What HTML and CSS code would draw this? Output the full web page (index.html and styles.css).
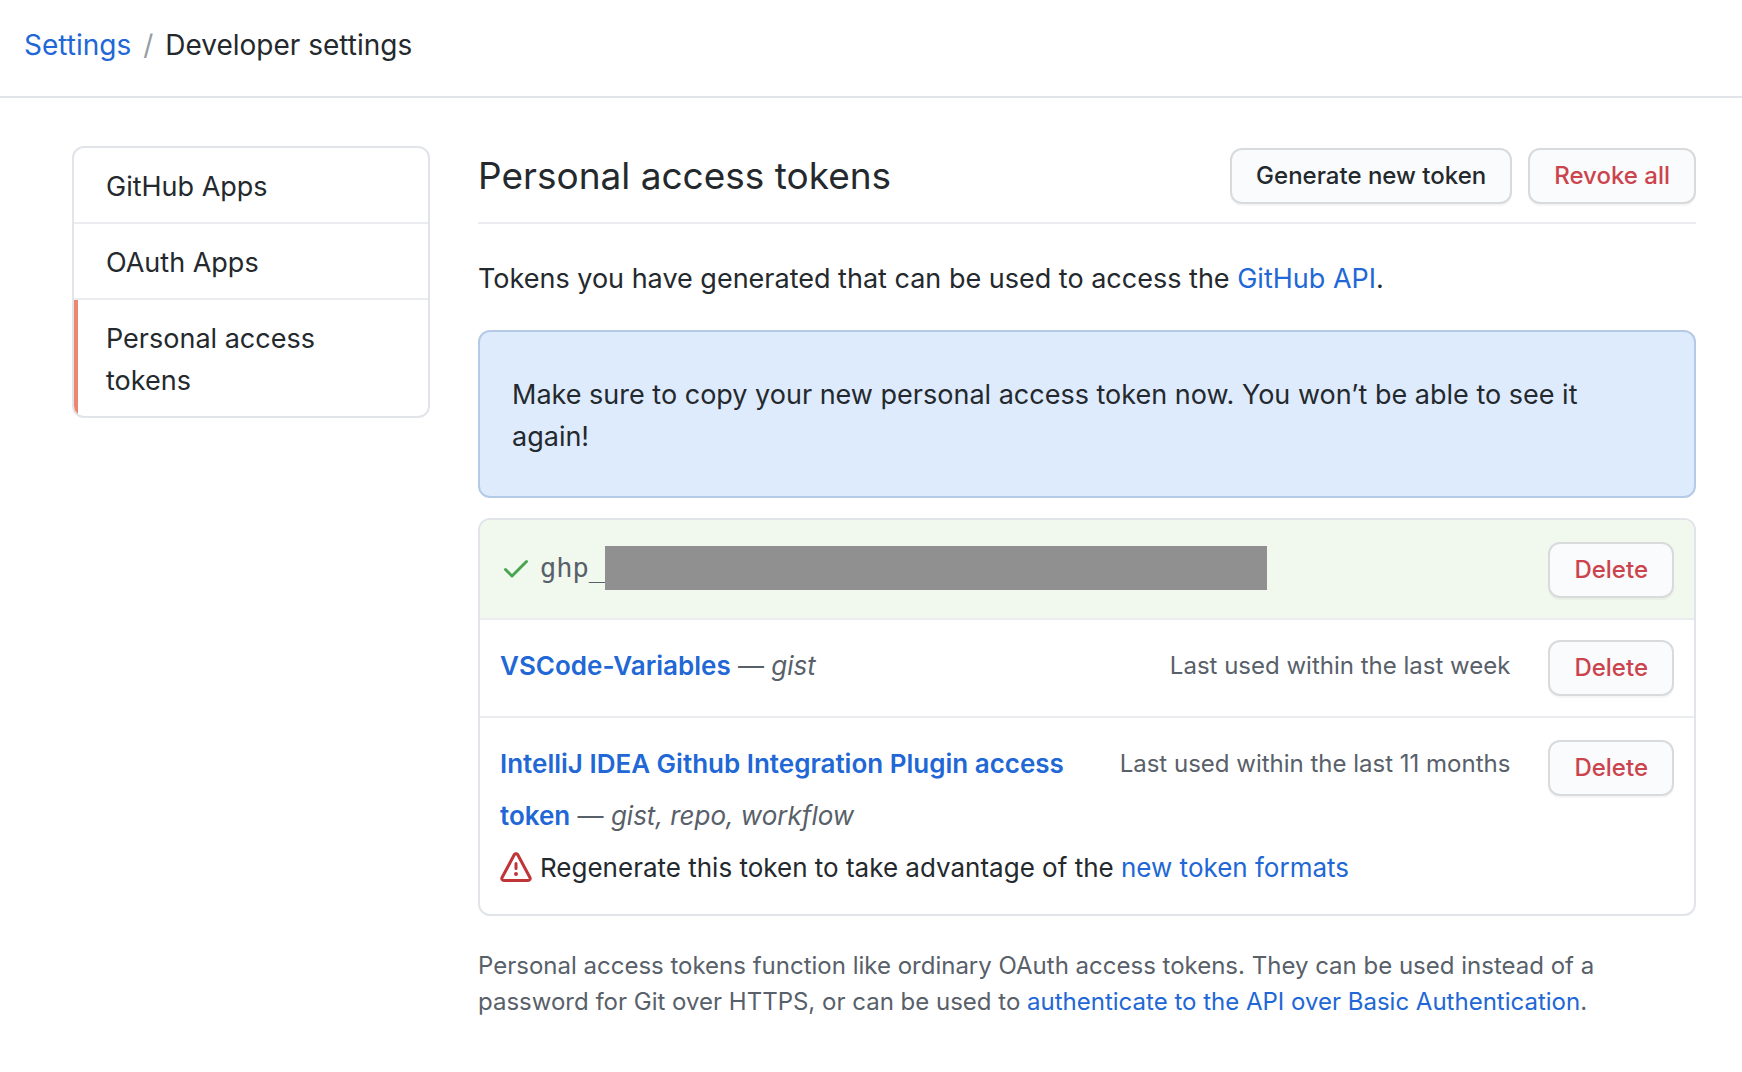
FILE: index.html
```html
<!DOCTYPE html>
<html lang="en">
<head>
<meta charset="utf-8">
<meta name="viewport" content="width=device-width, initial-scale=1">
<title>Personal access tokens</title>
<link rel="stylesheet" href="styles.css">
</head>
<body>
<header class="page-header">
  <nav class="breadcrumb" aria-label="Breadcrumb">
    <a href="#settings">Settings</a>
    <span class="breadcrumb-separator">/</span>
    <span>Developer settings</span>
  </nav>
</header>
<div class="layout">
  <nav class="side-menu" aria-label="Developer settings">
    <a class="side-item" href="#apps">GitHub Apps</a>
    <a class="side-item" href="#oauth">OAuth Apps</a>
    <a class="side-item side-item-current" href="#tokens" aria-current="page">Personal access tokens</a>
  </nav>
  <main class="content">
    <div class="subhead">
      <h1 class="subhead-title">Personal access tokens</h1>
      <div class="subhead-actions">
        <button class="btn" type="button">Generate new token</button>
        <button class="btn btn-danger" type="button">Revoke all</button>
      </div>
    </div>
    <p class="intro">Tokens you have generated that can be used to access the <a href="#api">GitHub API</a>.</p>
    <div class="flash">Make sure to copy your new personal access token now. You won’t be able to see it again!</div>
    <ul class="token-list">
      <li class="token token-new">
        <div class="token-value">
          <svg class="icon icon-check" viewBox="0 0 16 16" aria-hidden="true"><path d="M13.78 4.22a.75.75 0 010 1.06l-7.25 7.25a.75.75 0 01-1.06 0L2.22 9.28a.75.75 0 011.06-1.06L6 10.94l6.72-6.72a.75.75 0 011.06 0z"/></svg>
          <code class="token-code">ghp_</code><span class="redacted"></span>
        </div>
        <button class="btn btn-danger" type="button">Delete</button>
      </li>
      <li class="token">
        <div class="token-name"><a class="token-link" href="#vscode">VSCode-Variables</a> <span class="scopes">— <em>gist</em></span></div>
        <span class="last-used">Last used within the last week</span>
        <button class="btn btn-danger" type="button">Delete</button>
      </li>
      <li class="token token-outdated">
        <div class="token-name"><a class="token-link" href="#intellij">IntelliJ IDEA Github Integration Plugin access token</a> <span class="scopes">— <em>gist, repo, workflow</em></span></div>
        <span class="last-used">Last used within the last 11 months</span>
        <button class="btn btn-danger" type="button">Delete</button>
        <div class="token-notice">
          <svg class="icon icon-alert" viewBox="0 0 16 16" aria-hidden="true"><path fill-rule="evenodd" d="M8.22 1.754a.25.25 0 00-.44 0L1.698 13.132a.25.25 0 00.22.368h12.164a.25.25 0 00.22-.368L8.22 1.754zm-1.763-.707c.659-1.234 2.427-1.234 3.086 0l6.082 11.378A1.75 1.75 0 0114.082 15H1.918a1.75 1.75 0 01-1.543-2.575L6.457 1.047zM9 11a1 1 0 11-2 0 1 1 0 012 0zm-.25-5.25a.75.75 0 00-1.5 0v2.5a.75.75 0 001.5 0v-2.5z"/></svg>
          <span>Regenerate this token to take advantage of the <a href="#formats">new token formats</a></span>
        </div>
      </li>
    </ul>
    <p class="footnote">Personal access tokens function like ordinary OAuth access tokens. They can be used instead of a password for Git over HTTPS, or can be used to <a href="#basic">authenticate to the API over Basic Authentication</a>.</p>
  </main>
</div>
</body>
</html>
```

FILE: styles.css
```css
* {
  box-sizing: border-box;
}

body {
  margin: 0;
  background: #fff;
  color: #24292e;
  font-family: Inter, "Liberation Sans", sans-serif;
  font-size: 27px;
  line-height: 42px;
}

a {
  color: #2167d5;
  text-decoration: none;
}

.page-header {
  padding: 24px 24px 30px;
  border-bottom: 2px solid #e1e4e8;
}

.breadcrumb {
  display: flex;
  gap: 12px;
  font-size: 28px;
}

.breadcrumb-separator {
  color: #959da5;
}

.layout {
  display: grid;
  grid-template-columns: 358px minmax(0, 1fr);
  gap: 48px;
  align-items: start;
  padding: 48px 46px 48px 72px;
}

.side-menu {
  overflow: hidden;
  border: 2px solid #e1e4e8;
  border-radius: 12px;
}

.side-item {
  display: block;
  padding: 18px 64px 14px 32px;
  color: #24292e;
}

.side-item + .side-item {
  border-top: 2px solid #eaecef;
}

.side-item-current {
  background: linear-gradient(#ec8672, #ec8672) left / 4px 100% no-repeat;
}

.subhead {
  display: flex;
  align-items: center;
  justify-content: space-between;
  padding: 2px 0 18px;
  border-bottom: 2px solid #eaecef;
}

.subhead-title {
  margin: 0;
  font-size: 37px;
  font-weight: 400;
  line-height: 56px;
}

.subhead-actions {
  display: flex;
  gap: 16px;
}

.btn {
  height: 56px;
  padding: 0 24px;
  border: 2px solid #d8dadc;
  border-radius: 12px;
  background: #fafbfc;
  box-shadow: 0 2px 0 rgba(27, 31, 35, 0.04);
  color: #24292e;
  font-family: inherit;
  font-size: 24px;
  font-weight: 500;
  line-height: 40px;
  white-space: nowrap;
}

.btn-danger {
  color: #cb444d;
}

.intro {
  margin: 34px 0 30px;
}

.flash {
  padding: 42px 32px 38px;
  border: 2px solid #b4cae6;
  border-radius: 12px;
  background: #deebfd;
}

.token-list {
  margin: 20px 0 32px;
  padding: 0;
  overflow: hidden;
  border: 2px solid #e1e4e8;
  border-radius: 12px;
  list-style: none;
}

.token {
  display: grid;
  grid-template-columns: minmax(0, 1fr) auto auto;
  align-items: start;
  padding: 20px;
  font-size: 26px;
  line-height: 52px;
}

.token + .token {
  border-top: 2px solid #eaecef;
}

.token-new {
  grid-template-columns: minmax(0, 1fr) auto;
  padding-top: 22px;
  background: #f1f9ee;
}

.token-value,
.token-notice {
  display: flex;
  align-items: center;
}

.token-notice {
  grid-column: 1 / 3;
  grid-row: 2;
}

.token-outdated .btn {
  grid-row: 1 / 3;
  grid-column: 3;
  margin-top: 2px;
}

.icon {
  flex: none;
  width: 32px;
  height: 32px;
  margin-right: 8px;
}

.icon-check {
  fill: #4aa54f;
}

.icon-alert {
  fill: #c03537;
}

.token-code {
  color: #586069;
  font-family: "DejaVu Sans Mono", "Liberation Mono", monospace;
  font-size: 27px;
}

.redacted {
  flex: 0 1 662px;
  height: 44px;
  background: #909090;
}

.token-link {
  font-weight: 600;
}

.scopes,
.last-used,
.footnote {
  color: #586069;
}

.last-used {
  margin: 0 38px 0 32px;
  font-size: 24px;
}

.footnote {
  margin: 0;
  font-size: 24px;
  line-height: 36px;
}
```
